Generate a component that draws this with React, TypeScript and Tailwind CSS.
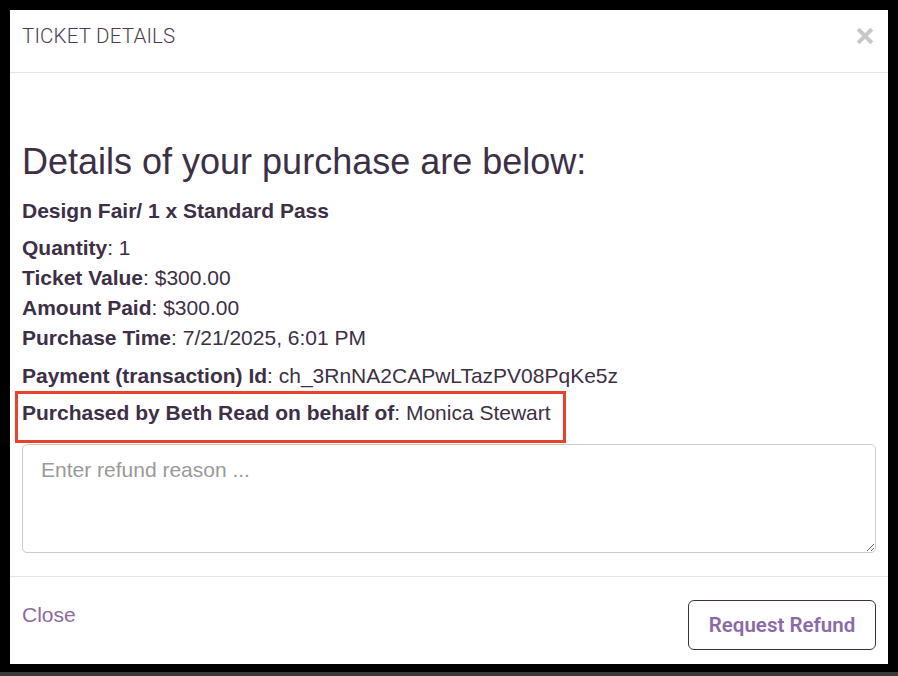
const detailRows = [
  { label: "Quantity", value: "1" },
  { label: "Ticket Value", value: "$300.00" },
  { label: "Amount Paid", value: "$300.00" },
  { label: "Purchase Time", value: "7/21/2025, 6:01 PM" },
];

export default function App() {
  return (
    <div className="w-[898px] h-[676px] bg-black flex flex-col overflow-hidden">
      <div className="mx-[10px] mt-[10px] h-[654px] bg-white flex flex-col text-[#3d3046] font-['Liberation_Sans',Arial,sans-serif]">
        {/* header */}
        <div className="h-[63px] shrink-0 border-b border-[#e5e5e5] pl-[12px] pr-[15px] pt-[12px] flex items-start justify-between">
          <h4 className="font-['Roboto',sans-serif] font-light text-[20.5px] leading-[28px] tracking-[0.2px] text-[#4a3d57]">
            TICKET DETAILS
          </h4>
          <button className="mt-[6px] w-[16px] h-[16px] flex items-center justify-center">
            <svg width="16" height="16" viewBox="0 0 16 16">
              <path d="M2.5 2.5 L13.5 13.5 M13.5 2.5 L2.5 13.5" stroke="#c8c8c8" strokeWidth="4" strokeLinecap="square" />
            </svg>
          </button>
        </div>

        {/* body */}
        <div className="flex-1 px-[12px] pt-[69px] pb-[22px] flex flex-col">
          <h2 className="text-[36px] leading-[40px]">Details of your purchase are below:</h2>
          <p className="mt-[14px] text-[21px] leading-[30px] font-bold">Design Fair/ 1 x Standard Pass</p>
          <div className="mt-[7px] text-[21px] leading-[30px]">
            {detailRows.map((row) => (
              <div key={row.label}>
                <span className="font-bold">{row.label}</span>: {row.value}
              </div>
            ))}
          </div>
          <p className="mt-[8px] text-[21px] leading-[30px]">
            <span className="font-bold">Payment (transaction) Id</span>: ch_3RnNA2CAPwLTazPV08PqKe5z
          </p>
          <div className="-ml-[7px] w-[551px] border-[3px] border-[#e8432a] pl-[4px] pt-[4px] pb-[12px] text-[21px] leading-[30px]">
            <span className="font-bold">Purchased by Beth Read on behalf of</span>: Monica Stewart
          </div>
          <textarea
            placeholder="Enter refund reason ..."
            className="mt-px h-[109px] w-full border border-[#cccccc] rounded-[5px] px-[18px] py-[10px] text-[21px] leading-[30px] placeholder:text-[#9a9a9a] resize-y outline-none"
          />
        </div>

        {/* footer */}
        <div className="shrink-0 border-t border-[#e5e5e5] px-[12px] pt-[23px] pb-[14px] flex items-start justify-between">
          <a className="text-[21px] leading-[30px] text-[#8b6ba6] cursor-pointer">Close</a>
          <button className="w-[188px] h-[50px] border border-[#3d3046] rounded-[6px] font-['Roboto',sans-serif] font-semibold text-[20.5px] text-[#8b6ba6]">
            Request Refund
          </button>
        </div>
      </div>
      <div className="mt-auto h-[4px] bg-[#3a3a3a]" />
    </div>
  );
}
